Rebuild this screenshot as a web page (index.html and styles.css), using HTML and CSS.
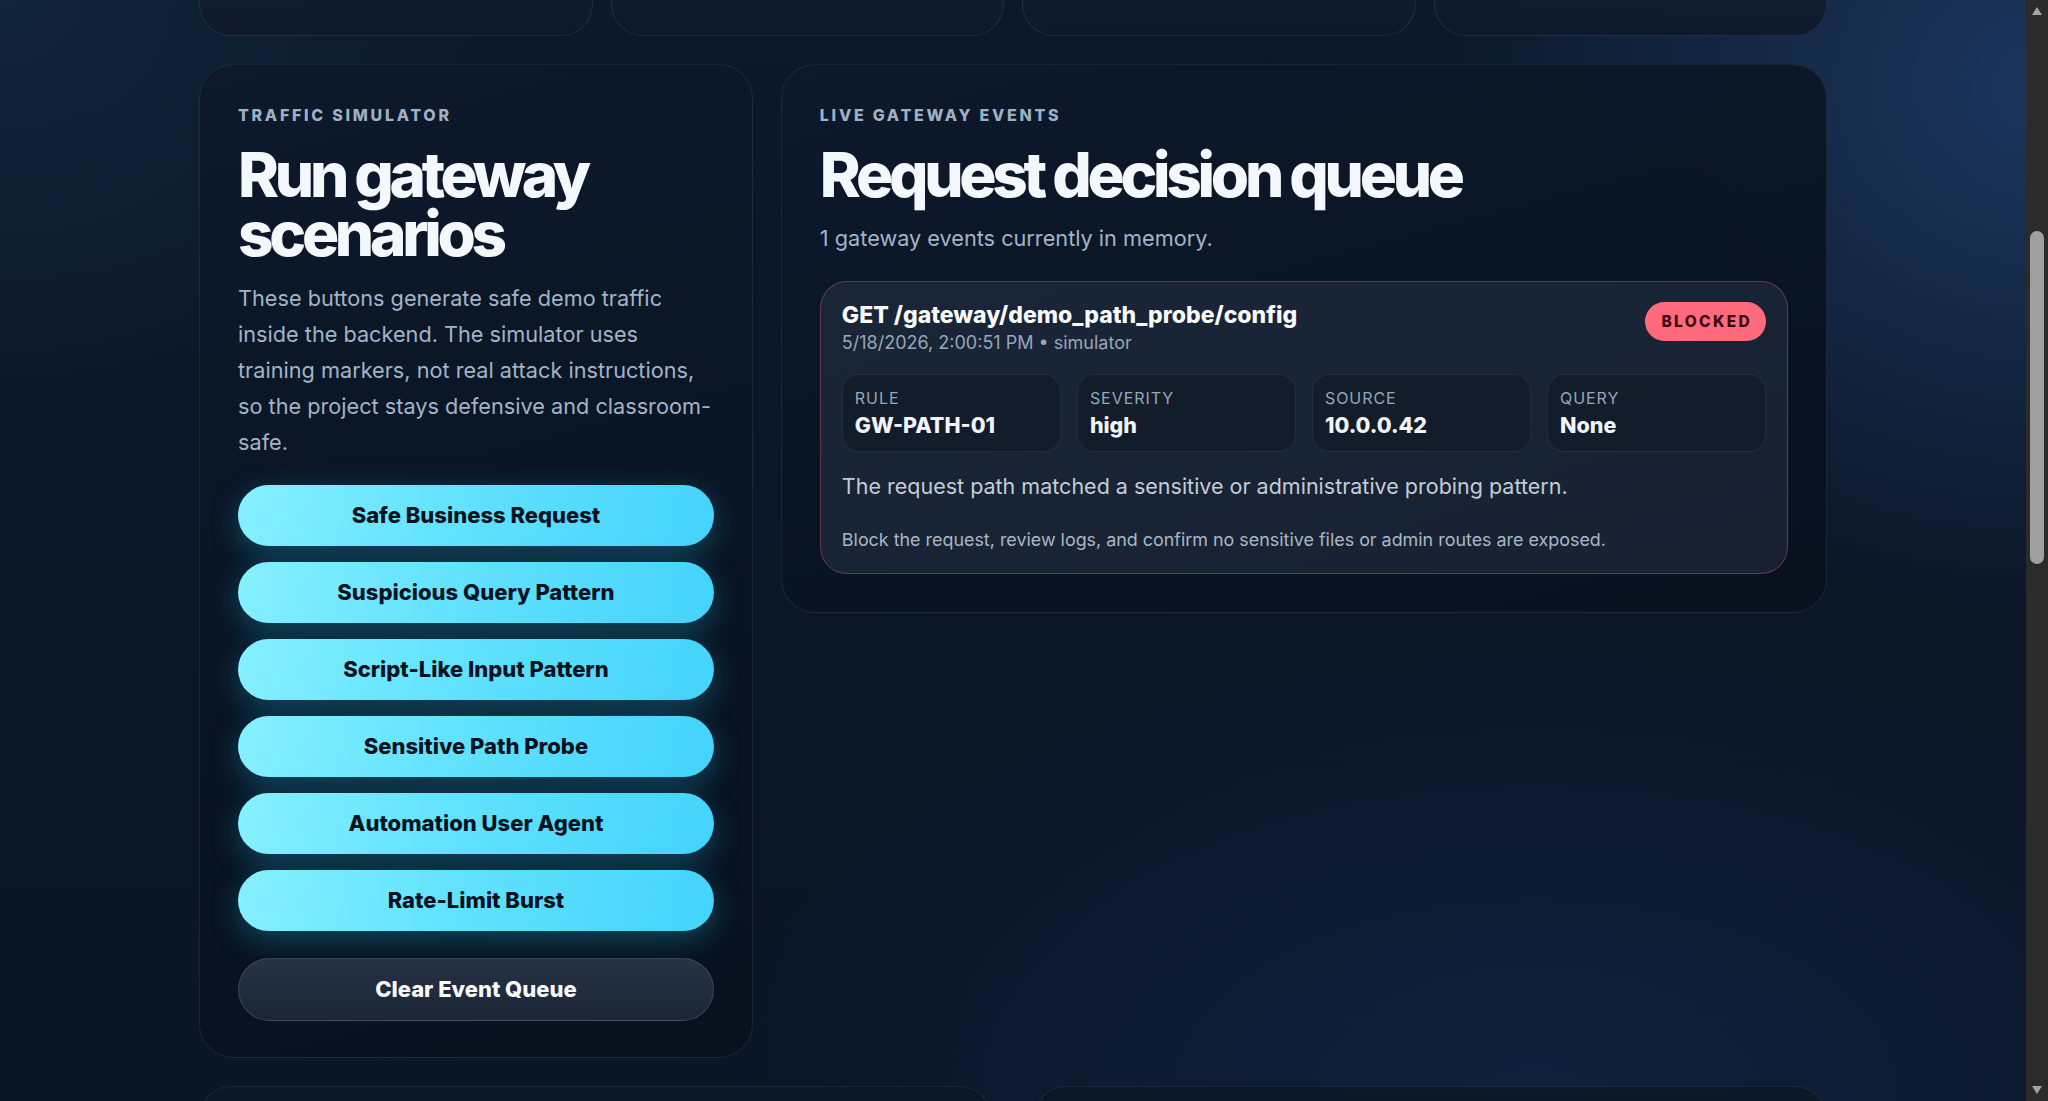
FILE: index.html
```html
<!DOCTYPE html>
<html lang="en">
<head>
<meta charset="utf-8">
<title>Gateway Simulator</title>
<link rel="stylesheet" href="styles.css">
</head>
<body>
<div class="page">
  <div class="stat-row">
    <div class="stat-card"></div>
    <div class="stat-card"></div>
    <div class="stat-card"></div>
    <div class="stat-card"></div>
  </div>

  <div class="main-grid">
    <section class="panel sim-panel">
      <div class="eyebrow">Traffic Simulator</div>
      <h2 class="panel-title">Run gateway scenarios</h2>
      <p class="panel-text">These buttons generate safe demo traffic inside the backend. The simulator uses training markers, not real attack instructions, so the project stays defensive and classroom-safe.</p>
      <div class="actions">
        <button class="btn btn-primary">Safe Business Request</button>
        <button class="btn btn-primary">Suspicious Query Pattern</button>
        <button class="btn btn-primary">Script-Like Input Pattern</button>
        <button class="btn btn-primary">Sensitive Path Probe</button>
        <button class="btn btn-primary">Automation User Agent</button>
        <button class="btn btn-primary">Rate-Limit Burst</button>
        <button class="btn btn-ghost">Clear Event Queue</button>
      </div>
    </section>

    <section class="panel events-panel">
      <div class="eyebrow">Live Gateway Events</div>
      <h2 class="panel-title">Request decision queue</h2>
      <p class="panel-sub">1 gateway events currently in memory.</p>

      <article class="event-card">
        <div class="event-head">
          <div class="event-id">
            <div class="event-path">GET /gateway/demo_path_probe/config</div>
            <div class="event-meta">5/18/2026, 2:00:51 PM • simulator</div>
          </div>
          <span class="badge badge-blocked">Blocked</span>
        </div>
        <div class="event-facts">
          <div class="fact">
            <div class="fact-label">Rule</div>
            <div class="fact-value">GW-PATH-01</div>
          </div>
          <div class="fact">
            <div class="fact-label">Severity</div>
            <div class="fact-value">high</div>
          </div>
          <div class="fact">
            <div class="fact-label">Source</div>
            <div class="fact-value">10.0.0.42</div>
          </div>
          <div class="fact">
            <div class="fact-label">Query</div>
            <div class="fact-value">None</div>
          </div>
        </div>
        <p class="event-desc">The request path matched a sensitive or administrative probing pattern.</p>
        <p class="event-rec">Block the request, review logs, and confirm no sensitive files or admin routes are exposed.</p>
      </article>
    </section>
  </div>

  <div class="lower-row">
    <div class="lower-card"></div>
    <div class="lower-card"></div>
  </div>
</div>

<div class="scrollbar" aria-hidden="true">
  <div class="scroll-arrow scroll-up"></div>
  <div class="scroll-track">
    <div class="scroll-thumb"></div>
  </div>
  <div class="scroll-arrow scroll-down"></div>
</div>
</body>
</html>
```
FILE: styles.css
```css
* {
  box-sizing: border-box;
}

html {
  color-scheme: dark;
}

body {
  margin: 0 22px 0 0;
  height: 1101px;
  overflow: hidden;
  font-family: Inter, "Noto Sans", "Liberation Sans", sans-serif;
  color: #f1f5f9;
  background-color: #0b1728;
  background-image:
    radial-gradient(ellipse 800px 700px at 100% 8%, rgba(42, 78, 135, 0.55), rgba(42, 78, 135, 0) 75%),
    radial-gradient(ellipse 1100px 600px at 75% 100%, rgba(22, 46, 88, 0.45), rgba(22, 46, 88, 0) 75%),
    radial-gradient(ellipse 700px 600px at 0% 0%, rgba(24, 48, 72, 0.5), rgba(24, 48, 72, 0) 70%),
    linear-gradient(180deg, #0c192b 0%, #0b1627 55%, #0a1526 100%);
}

.page {
  max-width: 1628px;
  margin: 0 auto;
  display: flex;
  flex-direction: column;
  gap: 28px;
}

/* top stat row (only its lower edge is in view) */
.stat-row {
  display: grid;
  grid-template-columns: repeat(4, 1fr);
  gap: 18px;
}

.stat-card {
  height: 36px;
  border: 1px solid rgba(148, 163, 184, 0.13);
  border-top: none;
  border-radius: 0 0 32px 32px;
  background: linear-gradient(180deg, rgba(16, 28, 46, 0.92), rgba(14, 25, 42, 0.92));
}

/* main grid */
.main-grid {
  display: grid;
  grid-template-columns: 0.9fr 1.7fr;
  gap: 28px;
  align-items: start;
}

.panel {
  border: 1px solid rgba(148, 163, 184, 0.13);
  border-radius: 34px;
  background: linear-gradient(165deg, rgba(14, 26, 44, 0.95) 0%, rgba(10, 20, 35, 0.95) 55%, rgba(8, 17, 30, 0.95) 100%);
  padding: 38px 38px 36px;
}

.events-panel {
  padding-bottom: 38px;
}

.eyebrow {
  font-size: 16px;
  line-height: 24px;
  font-weight: 800;
  letter-spacing: 0.17em;
  text-transform: uppercase;
  color: #9fb0c6;
}

.panel-title {
  margin: 19px 0 0;
  font-size: 62px;
  line-height: 0.95;
  font-weight: 800;
  letter-spacing: -0.069em;
  color: #f3f8fd;
}

.panel-text,
.panel-sub {
  font-size: 21.7px;
  line-height: 36px;
  color: #a3b3c9;
}

.panel-text {
  margin: 16px 0 0;
}

.panel-sub {
  margin: 15px 0 0;
}

/* buttons */
.actions {
  margin-top: 25px;
  display: flex;
  flex-direction: column;
  gap: 16px;
}

.btn {
  display: flex;
  align-items: center;
  justify-content: center;
  width: 100%;
  border-radius: 999px;
  font-family: Inter, "Noto Sans", "Liberation Sans", sans-serif;
  font-size: 22px;
  font-weight: 800;
  cursor: pointer;
}

.btn-primary {
  height: 61px;
  border: none;
  color: #07121f;
  background: linear-gradient(100deg, #86f0ff 0%, #62e2fd 45%, #44d3fb 100%);
  box-shadow: 0 8px 30px rgba(34, 200, 238, 0.3);
}

.btn-ghost {
  height: 63px;
  margin-top: 11px;
  color: #f8fafc;
  border: 1px solid rgba(148, 163, 184, 0.22);
  background: linear-gradient(180deg, #263345 0%, #1b2535 100%);
}

/* event card */
.event-card {
  margin-top: 25px;
  border: 1px solid rgba(251, 113, 133, 0.32);
  border-radius: 27px;
  background: linear-gradient(160deg, #1a2537 0%, #172132 100%);
  padding: 20px 21px 20px;
}

.event-head {
  display: flex;
  justify-content: space-between;
  align-items: flex-start;
}

.event-path {
  font-size: 23px;
  line-height: 26px;
  font-weight: 800;
  color: #f8fafc;
}

.event-meta {
  margin-top: 2px;
  font-size: 18px;
  line-height: 26px;
  color: #97a6ba;
}

.badge {
  display: inline-flex;
  align-items: center;
  justify-content: center;
  height: 39px;
  padding: 0 14px 0 16px;
  border-radius: 999px;
  font-size: 15.5px;
  font-weight: 800;
  letter-spacing: 0.15em;
  text-transform: uppercase;
}

.badge-blocked {
  background: #ff6b7d;
  color: #3a0812;
}

.event-facts {
  margin-top: 18px;
  display: grid;
  grid-template-columns: repeat(4, 1fr);
  gap: 16px;
}

.fact {
  border: 1px solid rgba(148, 163, 184, 0.13);
  border-radius: 17px;
  background: #131c2a;
  padding: 13px 12px 12px;
}

.fact-label {
  font-size: 16px;
  line-height: 20px;
  letter-spacing: 0.06em;
  text-transform: uppercase;
  color: #97a6ba;
}

.fact-value {
  margin-top: 3px;
  font-size: 21.5px;
  line-height: 28px;
  font-weight: 800;
  color: #f1f5f9;
}

.event-desc {
  margin: 18px 0 0;
  font-size: 21.5px;
  line-height: 32px;
  color: #c2ccd9;
}

.event-rec {
  margin: 25px 0 0;
  font-size: 17.9px;
  line-height: 26px;
  color: #a9b6c8;
}

/* lower row (only its upper edge is in view) */
.lower-row {
  display: grid;
  grid-template-columns: 1fr 1fr;
  gap: 42px;
}

.lower-card {
  height: 40px;
  border: 1px solid rgba(148, 163, 184, 0.13);
  border-bottom: none;
  border-radius: 32px 32px 0 0;
  background: linear-gradient(180deg, rgba(12, 24, 40, 0.9), rgba(10, 20, 34, 0.9));
}

/* browser scrollbar as seen in the capture */
.scrollbar {
  position: fixed;
  top: 0;
  right: 0;
  bottom: 0;
  width: 22px;
  background: #2b2b2b;
  display: flex;
  flex-direction: column;
}

.scroll-arrow {
  height: 22px;
  flex: none;
  position: relative;
}

.scroll-arrow::after {
  content: "";
  position: absolute;
  left: 6px;
  width: 0;
  height: 0;
  border-left: 5px solid transparent;
  border-right: 5px solid transparent;
}

.scroll-up::after {
  top: 7px;
  border-bottom: 8px solid #a3a3a3;
}

.scroll-down::after {
  top: 7px;
  border-top: 8px solid #a3a3a3;
}

.scroll-track {
  flex: 1;
  padding: 209px 4px 0 4px;
}

.scroll-thumb {
  height: 333px;
  border-radius: 7px;
  background: #9f9f9f;
}
```
